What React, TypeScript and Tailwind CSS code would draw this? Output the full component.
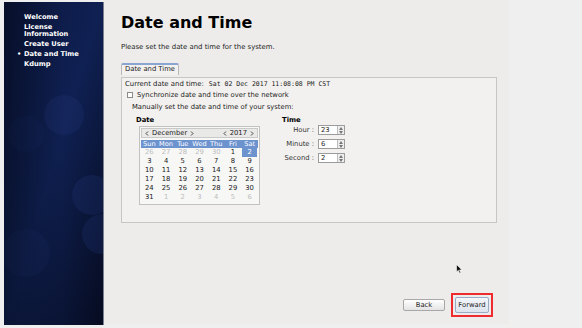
import React from 'react';

const navItems = [
  { label: 'Welcome' },
  { label: 'License\nInformation' },
  { label: 'Create User' },
  { label: 'Date and Time', current: true },
  { label: 'Kdump' },
];

const weekDays = ['Sun', 'Mon', 'Tue', 'Wed', 'Thu', 'Fri', 'Sat'];

const weeks: { d: number; out?: boolean; sel?: boolean }[][] = [
  [{ d: 26, out: true }, { d: 27, out: true }, { d: 28, out: true }, { d: 29, out: true }, { d: 30, out: true }, { d: 1 }, { d: 2, sel: true }],
  [3, 4, 5, 6, 7, 8, 9].map(d => ({ d })),
  [10, 11, 12, 13, 14, 15, 16].map(d => ({ d })),
  [17, 18, 19, 20, 21, 22, 23].map(d => ({ d })),
  [24, 25, 26, 27, 28, 29, 30].map(d => ({ d })),
  [{ d: 31 }, { d: 1, out: true }, { d: 2, out: true }, { d: 3, out: true }, { d: 4, out: true }, { d: 5, out: true }, { d: 6, out: true }],
];

const Spin = ({ label, value }: { label: string; value: string }) => (
  <div className="flex items-center h-[10px]">
    <span className="w-[40px] text-right pr-[4px] text-[6.8px] text-[#333]">{label}</span>
    <div className="flex h-[10px] w-[27px] border border-[#9c9c9c] bg-white">
      <span className="flex-1 pl-[2px] text-[6.8px] leading-[8px] text-[#222]">{value}</span>
      <div className="w-[7px] border-l border-[#bdbdbd] bg-[#eeeeee] flex flex-col items-center justify-center gap-[1px]">
        <svg width="4" height="3" viewBox="0 0 4 3"><path d="M0 3 L2 0 L4 3 Z" fill="#777" /></svg>
        <svg width="4" height="3" viewBox="0 0 4 3"><path d="M0 0 L2 3 L4 0 Z" fill="#777" /></svg>
      </div>
    </div>
  </div>
);

const Chev = ({ dir }: { dir: 'l' | 'r' }) => (
  <svg width="4" height="5" viewBox="0 0 4 5" className="inline-block">
    <path d={dir === 'l' ? 'M3 0.5 L1 2.5 L3 4.5' : 'M1 0.5 L3 2.5 L1 4.5'} fill="none" stroke="#333" strokeWidth="0.9" />
  </svg>
);

export default function App() {
  return (
    <div className="w-[582px] h-[328px] bg-[#efefef] flex font-[family-name:'DejaVu_Sans',sans-serif] overflow-hidden">
      {/* sidebar */}
      <div className="pl-[4px] pt-[2px] pb-[3px]">
        <div className="relative w-[100px] h-full overflow-hidden bg-gradient-to-br from-[#0b1740] via-[#0f2052] to-[#060b20] border-r border-[#7a8090]">
          <svg className="absolute inset-0" width="100" height="323" viewBox="0 0 100 323">
            <defs>
              <linearGradient id="shade" x1="0" y1="0" x2="1" y2="0">
                <stop offset="0" stopColor="#000" stopOpacity="0.35" />
                <stop offset="0.6" stopColor="#000" stopOpacity="0" />
              </linearGradient>
            </defs>
            <circle cx="60" cy="113" r="20" fill="#24397a" opacity="0.25" />
            <circle cx="22" cy="132" r="18" fill="#1e3270" opacity="0.18" />
            <circle cx="88" cy="193" r="20" fill="#24397a" opacity="0.25" />
            <circle cx="98" cy="232" r="20" fill="#24397a" opacity="0.25" />
            <circle cx="22" cy="251" r="24" fill="#1e3270" opacity="0.2" />
            <rect width="100" height="323" fill="url(#shade)" />
          </svg>
          <ul className="relative pt-[12px] pl-[20px] flex flex-col gap-[3px]">
            {navItems.map(item => (
              <li key={item.label} className="relative text-white font-bold text-[6.7px] leading-[7px] whitespace-pre-line">
                {item.current && <span className="absolute -left-[7px] top-0">•</span>}
                {item.label}
              </li>
            ))}
          </ul>
        </div>
      </div>

      {/* main */}
      <div className="relative w-[405px] h-[324px] bg-[#edecea] pl-[17px] pt-[11px]">
        <h1 className="text-[16px] leading-[24px] font-bold text-black">Date and Time</h1>
        <p className="mt-[8px] text-[6.9px] leading-[8px] text-[#222]">Please set the date and time for the system.</p>

        <div className="mt-[3px] w-[376px]">
          <div className="inline-block px-[3px] h-[12px] border border-b-0 border-[#b9b9b9] border-t-[#8aa6d0] border-t-2 rounded-t-[2px] bg-[#f2f1ef] text-[6.8px] leading-[9px] text-[#222]">
            Date and Time
          </div>
          <div className="h-[146px] -mt-px border border-[#c6c6c6] bg-[#f2f1ef] pl-[3px] pt-[2px]">
            <div className="text-[6.9px] leading-[8px] text-[#222] flex">
              <span>Current date and time:</span>
              <span className="ml-[5px] font-[family-name:'DejaVu_Sans_Mono',monospace] text-[6.5px]">Sat 02 Dec 2017 11:08:08 PM CST</span>
            </div>
            <div className="mt-[3px] ml-[2px] flex items-center gap-[4px]">
              <span className="w-[6px] h-[6px] border border-[#8c8c8c] bg-white" />
              <span className="text-[6.8px] leading-[8px] text-[#222]">Synchronize date and time over the network</span>
            </div>
            <div className="mt-[4px] ml-[7px] text-[6.8px] leading-[8px] text-[#222]">Manually set the date and time of your system:</div>

            <div className="mt-[5px] flex">
              <div className="ml-[11px] w-[146px]">
                <div className="font-bold text-[6.8px] leading-[8px] text-black">Date</div>
                <div className="mt-[2px] ml-[3px] w-[121px] border border-[#c2c2c2] bg-[#f7f7f6] p-[1px]">
                  <div className="flex justify-between items-center h-[10px] px-[3px] bg-[#e9e9e8] border border-[#c9c9c9] text-[6.8px] text-[#222]">
                    <span className="flex items-center gap-[3px]"><Chev dir="l" />December<Chev dir="r" /></span>
                    <span className="flex items-center gap-[3px]"><Chev dir="l" />2017<Chev dir="r" /></span>
                  </div>
                  <div className="mt-[2px] grid grid-cols-7 bg-[#6d93cf] text-white text-[6.6px] leading-[8px] text-center">
                    {weekDays.map(w => <span key={w}>{w}</span>)}
                  </div>
                  <div className="grid grid-cols-7 text-center text-[6.8px] leading-[9px] pb-[1px]">
                    {weeks.flat().map((c, i) => (
                      <span key={i} className={c.sel ? 'mx-[1px] bg-[#6d93cf] text-white' : c.out ? 'text-[#bdbdbd]' : 'text-[#222]'}>
                        {c.d}
                      </span>
                    ))}
                  </div>
                </div>
              </div>

              <div>
                <div className="font-bold text-[6.8px] leading-[8px] text-black">Time</div>
                <div className="mt-[1px] -ml-[4px] flex flex-col gap-[4px]">
                  <Spin label="Hour :" value="23" />
                  <Spin label="Minute :" value="6" />
                  <Spin label="Second :" value="2" />
                </div>
              </div>
            </div>
          </div>
        </div>

        {/* cursor */}
        <svg className="absolute left-[352px] top-[264px]" width="7" height="10" viewBox="0 0 7 10">
          <path d="M0.5 0.5 L0.5 8 L2.3 6.3 L3.6 9.3 L4.8 8.8 L3.5 5.9 L6 5.9 Z" fill="#111" stroke="#fff" strokeWidth="0.6" />
        </svg>

        <div className="absolute left-[299px] top-[293px] flex items-center gap-[6px]">
          <button className="w-[42px] h-[12px] rounded-[2px] border border-[#a8a8a8] bg-gradient-to-b from-white to-[#e4e4e4] text-[6.8px] leading-[10px] text-[#222]">Back</button>
          <div className="p-[2px] border-2 border-[#ee2b2f]">
            <button className="block w-[34px] h-[16px] rounded-[2px] border border-[#9aabc6] bg-gradient-to-b from-[#f4f6f9] to-[#dde4ee] text-[6.8px] leading-[14px] text-[#222]">Forward</button>
          </div>
        </div>
      </div>
    </div>
  );
}
